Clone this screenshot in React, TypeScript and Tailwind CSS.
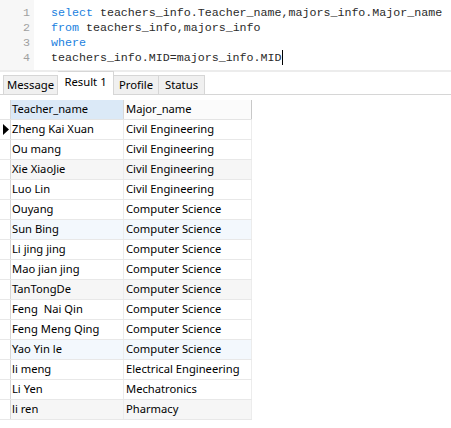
import React from "react";

const rows: [string, string][] = [
  ["Zheng Kai Xuan", "Civil Engineering"],
  ["Ou mang", "Civil Engineering"],
  ["Xie XiaoJie", "Civil Engineering"],
  ["Luo Lin", "Civil Engineering"],
  ["Ouyang", "Computer Science"],
  ["Sun Bing", "Computer Science"],
  ["Li jing jing", "Computer Science"],
  ["Mao jian jing", "Computer Science"],
  ["TanTongDe", "Computer Science"],
  ["Feng  Nai Qin", "Computer Science"],
  ["Feng Meng Qing", "Computer Science"],
  ["Yao Yin le", "Computer Science"],
  ["li meng", "Electrical Engineering"],
  ["Li Yen", "Mechatronics"],
  ["li ren", "Pharmacy"],
];

const rowBg = (i: number) => {
  const n = i + 1;
  if (n === 6 || n === 12) return "bg-[#f3f8fd]";
  if (n % 3 === 0) return "bg-[#f6f6f6]";
  return "bg-white";
};

export default function App() {
  const mono = { fontFamily: '"Liberation Mono", monospace' };
  const ui = { fontFamily: '"Noto Sans", sans-serif' };
  return (
    <div className="w-[451px] h-[428px] bg-white overflow-hidden relative">
      {/* Editor */}
      <div className="flex h-[70px] text-[11.65px] leading-[15px]" style={mono}>
        <div className="w-[34px] bg-[#f7f7f7] pt-[5px] pr-[4px] text-right text-[#a0a0a0]">
          <div>1</div>
          <div>2</div>
          <div>3</div>
          <div>4</div>
        </div>
        <div className="pl-[17px] pt-[5px] text-[#2b2b2b] whitespace-pre">
          <div>
            <span className="text-[#1a7fe0]">select</span> teachers_info.Teacher_name,majors_info.Major_name
          </div>
          <div>
            <span className="text-[#1a7fe0]">from</span> teachers_info,majors_info
          </div>
          <div>
            <span className="text-[#1a7fe0]">where</span>
          </div>
          <div className="flex items-center">
            teachers_info.MID=majors_info.MID
            <span className="inline-block w-px h-[15px] bg-black" />
          </div>
        </div>
      </div>
      <div className="h-[2px] bg-[#ececec]" />
      {/* Tabs */}
      <div className="h-[23px] border-b border-[#d6d6d6] flex items-end pl-[3px] text-[11.3px] text-black" style={ui}>
        <div className="w-[55px] h-[20px] -mb-px border border-[#d6d6d6] bg-[#f0f0f0] flex items-center justify-center">Message</div>
        <div className="w-[56px] h-[24px] -mb-px border border-b-0 border-l-0 border-[#d6d6d6] bg-white flex items-start justify-center pt-[2px]">Result 1</div>
        <div className="w-[45px] h-[20px] -mb-px border border-l-0 border-[#d6d6d6] bg-[#f0f0f0] flex items-center justify-center">Profile</div>
        <div className="w-[46px] h-[20px] -mb-px border border-l-0 border-[#d6d6d6] bg-[#f0f0f0] flex items-center justify-center">Status</div>
      </div>
      {/* Grid */}
      <div className="pt-[5px] text-[11.2px] text-black" style={ui}>
        <div className="flex h-[20px] w-[252px] border-b border-[#e4e4e4]">
          <div className="w-[11px] border-r border-[#d8d8d8] bg-white" />
          <div className="w-[113px] border-r border-[#d8d8d8] bg-[#dbe9f7] pl-[1px] flex items-center">Teacher_name</div>
          <div className="w-[128px] border-r border-[#c8c8c8] bg-[#fbfbfb] pl-[2px] flex items-center">Major_name</div>
        </div>
        {rows.map(([a, b], i) => (
          <div key={i} className={`flex h-[20px] w-[252px] border-b border-[#e8e8e8] ${rowBg(i)}`}>
            <div className="w-[11px] border-r border-[#d8d8d8] bg-white flex items-center pl-[3px]">
              {i === 0 && (
                <svg width="6" height="11" viewBox="0 0 6 11">
                  <polygon points="0,0 6,5.5 0,11" fill="#000" />
                </svg>
              )}
            </div>
            <div className="w-[113px] border-r border-[#ececec] pl-[1px] flex items-center whitespace-pre">{a}</div>
            <div className="w-[128px] border-r border-[#ececec] pl-[2px] flex items-center whitespace-pre">{b}</div>
          </div>
        ))}
      </div>
    </div>
  );
}
